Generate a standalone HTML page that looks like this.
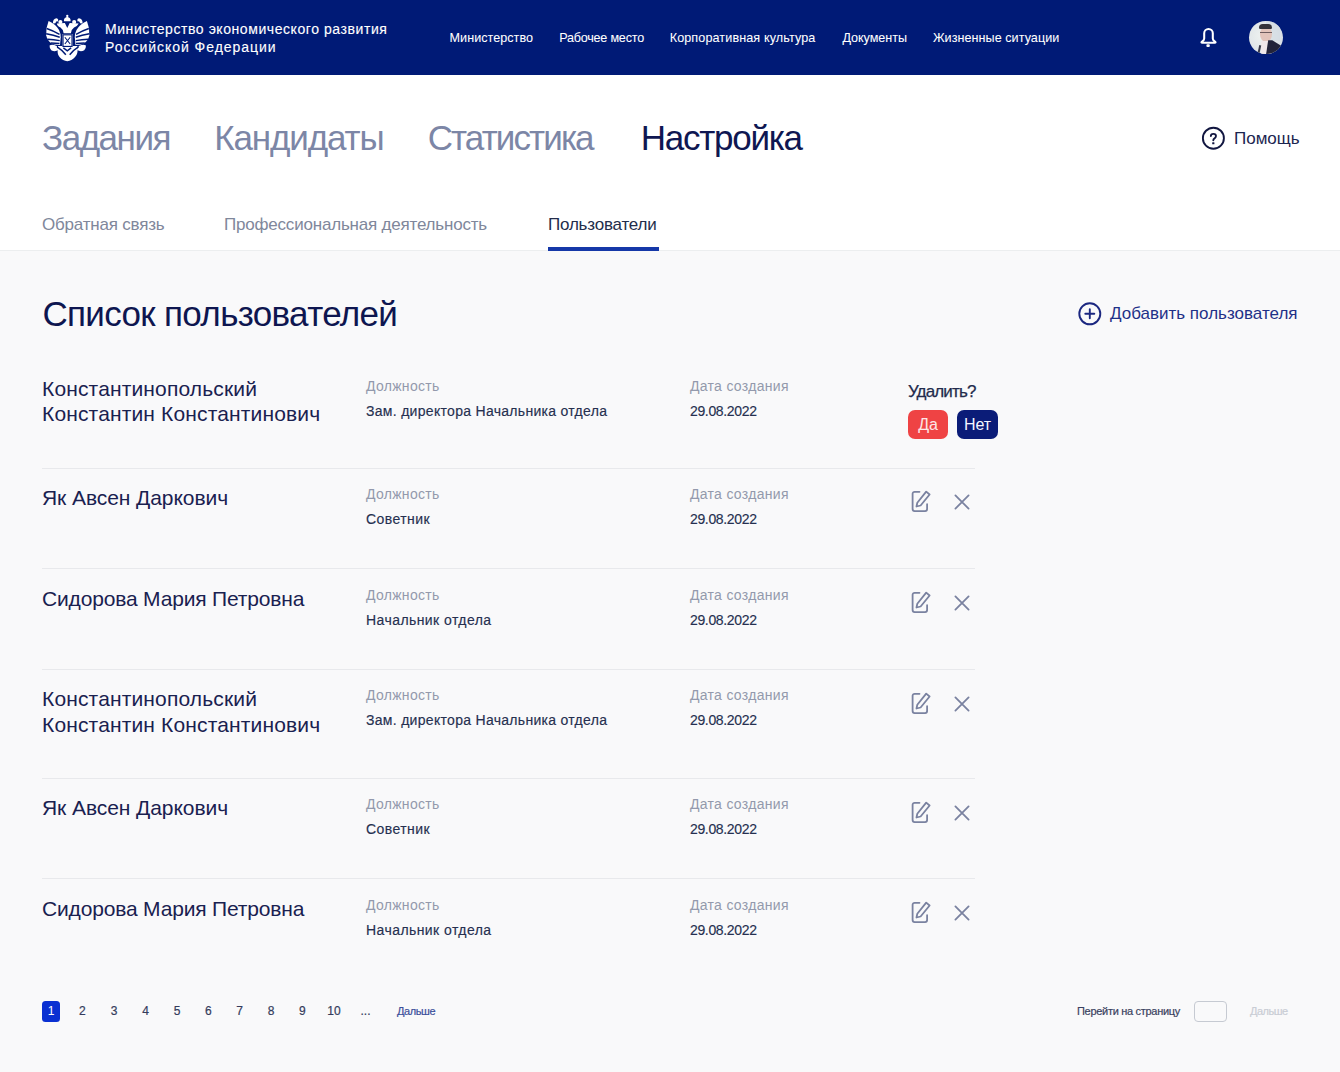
<!DOCTYPE html>
<html lang="ru">
<head>
<meta charset="utf-8">
<title>Список пользователей</title>
<style>
*{margin:0;padding:0;box-sizing:border-box}
html,body{width:1340px;height:1072px;overflow:hidden}
body{position:relative;background:#f9f9fa;font-family:"Liberation Sans",sans-serif;color:#1c2a5c}
.a{position:absolute;white-space:nowrap;line-height:1}
#hdr{position:absolute;left:0;top:0;width:1340px;height:75px;background:#001a76}
#top{position:absolute;left:0;top:75px;width:1340px;height:176px;background:#fff;border-bottom:1px solid #eceeef}
.ht{color:#fff;font-size:14px;-webkit-text-stroke:0.12px #fff}
.nav{color:#fff;font-size:12.6px;-webkit-text-stroke:0.05px #fff}
.bt{font-size:35px;color:#7c86a6}
.st{font-size:17px;color:#80879b;letter-spacing:-0.2px}
.nm{font-size:21px;color:#1a2150;line-height:25.2px;letter-spacing:0.18px}
.lb{font-size:14px;color:#9399ac;letter-spacing:0.3px}
.vl{font-size:14px;color:#263050;letter-spacing:0.3px;-webkit-text-stroke:0.15px #263050}
.row{position:absolute;left:0;width:1340px;height:100px}
.sep{position:absolute;left:42px;width:933px;height:1px;background:#e8e9ec}
.pg{font-size:12px;color:#343c5c;-webkit-text-stroke:0.2px currentColor}
.btn{position:absolute;height:29px;border-radius:7px;font-size:16px;line-height:30.4px;text-align:center}
.ic{position:absolute;fill:none;stroke:#7a82a0;stroke-width:1.8;stroke-linecap:round;stroke-linejoin:round}
</style>
</head>
<body>
<div id="hdr"></div>
<div id="top"></div>

<svg class="a" style="left:44px;top:12px" width="48" height="52" viewBox="0 0 990 1072"><g fill="#fff">
<circle cx="480" cy="82" r="24"/>
<path d="M412 190 Q405 120 480 100 Q555 120 548 190 Z"/>
<circle cx="338" cy="205" r="42"/><circle cx="622" cy="205" r="42"/>
<path d="M185 235 Q180 135 260 130 Q310 145 285 195 Q250 175 235 230 Z"/>
<path d="M795 235 Q800 135 720 130 Q670 145 695 195 Q730 175 745 230 Z"/>
<path d="M265 235 L430 225 L480 330 L530 225 L715 235 Q690 290 620 320 Q560 360 555 440 L405 440 Q400 360 340 320 Q270 290 265 235 Z"/>
<path d="M95 185 Q240 250 310 370 Q345 440 345 520 L330 680 Q230 690 150 645 Q70 590 45 480 Q35 330 95 185 Z"/>
<path d="M885 185 Q740 250 670 370 Q635 440 635 520 L650 680 Q750 690 830 645 Q910 590 935 480 Q945 330 885 185 Z"/>
<path d="M378 455 H592 V725 H378 Z"/>
<path d="M115 690 Q170 660 260 700 L300 780 Q230 830 150 790 Q110 750 115 690 Z"/>
<path d="M865 690 Q810 660 720 700 L680 780 Q750 830 830 790 Q870 750 865 690 Z"/>
<path d="M290 700 L690 700 Q710 860 640 930 Q570 1010 480 1015 Q390 1010 320 930 Q260 860 290 700 Z"/>
</g>
<g fill="none" stroke="#001a76">
<path stroke-width="30" d="M55 340 Q200 390 320 460 M45 450 Q200 480 325 520 M70 560 Q200 570 325 590 M140 640 Q230 640 320 650"/>
<path stroke-width="30" d="M925 340 Q780 390 660 460 M935 450 Q780 480 655 520 M910 560 Q780 570 655 590 M840 640 Q750 640 660 650"/>
<path stroke-width="30" d="M270 720 Q380 790 450 880 M710 720 Q600 790 530 880 M400 740 L480 800 L560 740"/>
<rect x="392" y="470" width="186" height="240" stroke-width="24"/>
<path stroke-width="22" d="M430 520 L540 660 M540 520 L430 660"/>
</g>
</svg>
<div class="a ht" style="left:105px;top:21.6px;letter-spacing:0.57px">Министерство экономического развития</div>
<div class="a ht" style="left:105px;top:39.8px;letter-spacing:0.97px">Российской Федерации</div>

<div class="a nav" style="left:449.6px;top:32px;letter-spacing:0.03px">Министерство</div>
<div class="a nav" style="left:559.2px;top:32px;letter-spacing:-0.22px">Рабочее место</div>
<div class="a nav" style="left:669.7px;top:32px;letter-spacing:0.11px">Корпоративная культура</div>
<div class="a nav" style="left:842.4px;top:32px;letter-spacing:-0.04px">Документы</div>
<div class="a nav" style="left:932.9px;top:32px;letter-spacing:0.05px">Жизненные ситуации</div>

<svg class="a" style="left:1197px;top:26px" width="23" height="23" viewBox="0 0 23 23"><path d="M7.2 7.3A4.3 4.3 0 0 1 15.8 7.3V12.6Q15.8 14.2 17.6 15.4Q19.4 16.7 17.8 16.7H5.2Q3.6 16.7 5.4 15.4Q7.2 14.2 7.2 12.6Z" fill="none" stroke="#fff" stroke-width="2.05" stroke-linejoin="round"/><rect x="9.4" y="18.2" width="3.4" height="2.9" rx="1" fill="#fff"/></svg>
<div class="a" style="left:1249.3px;top:20.8px;width:33.5px;height:33.5px;border-radius:50%;overflow:hidden;background:radial-gradient(circle at 40% 45%,#eef2f0 0,#e3e8ea 45%,#cdd5e2 100%)">
  <div style="position:absolute;left:17px;top:0;width:14px;height:20px;background:#d3dbe3;opacity:.7"></div>
  <div style="position:absolute;left:10.4px;top:6px;width:12.3px;height:15.5px;border-radius:45% 45% 50% 50%;background:#e2c4bb"></div>
  <div style="position:absolute;left:10.2px;top:3px;width:12.6px;height:5px;border-radius:6px 6px 2px 2px;background:#34323a"></div>
  <div style="position:absolute;left:10.6px;top:10.8px;width:12px;height:1.3px;background:#6e5c5e"></div>
  <div style="position:absolute;left:11.5px;top:20px;width:11px;height:15px;background:#f0e8ea"></div>
  <div style="position:absolute;left:16.5px;top:19.5px;width:17px;height:16px;background:#22233a;clip-path:polygon(14% 0,38% 0,100% 40%,100% 100%,0 100%)"></div>
  <div style="position:absolute;left:8.8px;top:24px;width:1.6px;height:12px;background:#3a3b4a;transform:rotate(12deg)"></div>
</div>

<div class="a bt" style="left:42px;top:120px;letter-spacing:-1.47px">Задания</div>
<div class="a bt" style="left:214.2px;top:120px;letter-spacing:-1.12px">Кандидаты</div>
<div class="a bt" style="left:427.7px;top:120px;letter-spacing:-1.88px">Статистика</div>
<div class="a bt" style="left:640.7px;top:120px;color:#0f1752;letter-spacing:-1.24px">Настройка</div>

<svg class="a" style="left:1200px;top:125px" width="27" height="27" viewBox="0 0 27 27"><circle cx="13.4" cy="13.2" r="10.5" fill="none" stroke="#111640" stroke-width="1.9"/><path d="M10.85 11.1Q10.85 8.85 13.4 8.85Q15.95 8.85 15.95 11Q15.95 12.5 14.5 13.4Q13.3 14.1 13.3 15.3" fill="none" stroke="#111640" stroke-width="1.9" stroke-linecap="round"/><rect x="12.2" y="17.2" width="2.2" height="2.1" rx="0.4" fill="#111640"/></svg>
<div class="a" style="left:1234px;top:129.7px;font-size:17px;color:#1b2550">Помощь</div>

<div class="a st" style="left:42px;top:215.5px">Обратная связь</div>
<div class="a st" style="left:224px;top:215.5px">Профессиональная деятельность</div>
<div class="a st" style="left:548px;top:215.5px;color:#232d4b">Пользователи</div>
<div class="a" style="left:547.5px;top:247px;width:111px;height:4px;background:#1538a8"></div>

<div class="a" style="left:42.4px;top:296px;font-size:35px;color:#0e1650;letter-spacing:-0.65px">Список пользователей</div>
<svg class="a" style="left:1077px;top:301px" width="26" height="26" viewBox="0 0 26 26"><circle cx="12.8" cy="12.8" r="10.5" fill="none" stroke="#1b2780" stroke-width="1.9"/><path d="M12.8 8.3V17.3M8.3 12.8H17.3" stroke="#1b2780" stroke-width="1.9" stroke-linecap="round"/></svg>
<div class="a" style="left:1110px;top:305px;font-size:17px;color:#1f3188">Добавить пользователя</div>

<div class="row" style="top:359.5px">
<div class="a nm" style="left:42px;top:16.5px;letter-spacing:0.15px">Константинопольский<br>Константин Константинович</div>
<div class="a lb" style="left:366px;top:19px">Должность</div>
<div class="a vl" style="left:366px;top:44px;letter-spacing:0.3px">Зам. директора Начальника отдела</div>
<div class="a lb" style="left:690px;top:19px">Дата создания</div>
<div class="a vl" style="left:690px;top:44px;letter-spacing:-0.35px">29.08.2022</div>
<div class="a" style="left:908px;top:23px;font-size:17px;color:#232b4c;letter-spacing:-0.85px;-webkit-text-stroke:0.25px #232b4c">Удалить?</div>
<div class="btn" style="left:908px;top:50.5px;width:40px;background:#ef4344;color:#fde6e6">Да</div>
<div class="btn" style="left:957px;top:50.5px;width:41px;background:#0b1c78;color:#f4f6ff">Нет</div>
</div>
<div class="row" style="top:468.3px">
<div class="a nm" style="left:42px;top:17px;letter-spacing:-0.07px">Як Авсен Даркович</div>
<div class="a lb" style="left:366px;top:19px">Должность</div>
<div class="a vl" style="left:366px;top:44px;letter-spacing:0.43px">Советник</div>
<div class="a lb" style="left:690px;top:19px">Дата создания</div>
<div class="a vl" style="left:690px;top:44px;letter-spacing:-0.35px">29.08.2022</div>
<svg class="ic" style="left:911px;top:22.2px" width="20" height="22" viewBox="0 0 20 22"><path d="M8.5 1.8H3.6a2 2 0 0 0-2 2V19.1a2 2 0 0 0 2 2H14.1a2 2 0 0 0 2-2V14.2"/><path d="M5.5 16.5L6.3 12.8L15.2 1.6L18.6 4.5L9.6 15.5Z"/></svg>
<svg class="ic" style="left:953px;top:25.2px" width="18" height="18" viewBox="0 0 18 18"><path d="M2.4 2.4L15.6 15.6M15.6 2.4L2.4 15.6"/></svg>
</div>
<div class="row" style="top:568.8px">
<div class="a nm" style="left:42px;top:17px;letter-spacing:-0.17px">Сидорова Мария Петровна</div>
<div class="a lb" style="left:366px;top:19px">Должность</div>
<div class="a vl" style="left:366px;top:44px;letter-spacing:0.43px">Начальник отдела</div>
<div class="a lb" style="left:690px;top:19px">Дата создания</div>
<div class="a vl" style="left:690px;top:44px;letter-spacing:-0.35px">29.08.2022</div>
<svg class="ic" style="left:911px;top:22.2px" width="20" height="22" viewBox="0 0 20 22"><path d="M8.5 1.8H3.6a2 2 0 0 0-2 2V19.1a2 2 0 0 0 2 2H14.1a2 2 0 0 0 2-2V14.2"/><path d="M5.5 16.5L6.3 12.8L15.2 1.6L18.6 4.5L9.6 15.5Z"/></svg>
<svg class="ic" style="left:953px;top:25.2px" width="18" height="18" viewBox="0 0 18 18"><path d="M2.4 2.4L15.6 15.6M15.6 2.4L2.4 15.6"/></svg>
</div>
<div class="row" style="top:669.4px">
<div class="a nm" style="left:42px;top:17px;letter-spacing:0.15px">Константинопольский<br>Константин Константинович</div>
<div class="a lb" style="left:366px;top:19px">Должность</div>
<div class="a vl" style="left:366px;top:44px;letter-spacing:0.3px">Зам. директора Начальника отдела</div>
<div class="a lb" style="left:690px;top:19px">Дата создания</div>
<div class="a vl" style="left:690px;top:44px;letter-spacing:-0.35px">29.08.2022</div>
<svg class="ic" style="left:911px;top:22.2px" width="20" height="22" viewBox="0 0 20 22"><path d="M8.5 1.8H3.6a2 2 0 0 0-2 2V19.1a2 2 0 0 0 2 2H14.1a2 2 0 0 0 2-2V14.2"/><path d="M5.5 16.5L6.3 12.8L15.2 1.6L18.6 4.5L9.6 15.5Z"/></svg>
<svg class="ic" style="left:953px;top:25.2px" width="18" height="18" viewBox="0 0 18 18"><path d="M2.4 2.4L15.6 15.6M15.6 2.4L2.4 15.6"/></svg>
</div>
<div class="row" style="top:778.4px">
<div class="a nm" style="left:42px;top:17px;letter-spacing:-0.07px">Як Авсен Даркович</div>
<div class="a lb" style="left:366px;top:19px">Должность</div>
<div class="a vl" style="left:366px;top:44px;letter-spacing:0.43px">Советник</div>
<div class="a lb" style="left:690px;top:19px">Дата создания</div>
<div class="a vl" style="left:690px;top:44px;letter-spacing:-0.35px">29.08.2022</div>
<svg class="ic" style="left:911px;top:22.2px" width="20" height="22" viewBox="0 0 20 22"><path d="M8.5 1.8H3.6a2 2 0 0 0-2 2V19.1a2 2 0 0 0 2 2H14.1a2 2 0 0 0 2-2V14.2"/><path d="M5.5 16.5L6.3 12.8L15.2 1.6L18.6 4.5L9.6 15.5Z"/></svg>
<svg class="ic" style="left:953px;top:25.2px" width="18" height="18" viewBox="0 0 18 18"><path d="M2.4 2.4L15.6 15.6M15.6 2.4L2.4 15.6"/></svg>
</div>
<div class="row" style="top:878.7px">
<div class="a nm" style="left:42px;top:17px;letter-spacing:-0.17px">Сидорова Мария Петровна</div>
<div class="a lb" style="left:366px;top:19px">Должность</div>
<div class="a vl" style="left:366px;top:44px;letter-spacing:0.43px">Начальник отдела</div>
<div class="a lb" style="left:690px;top:19px">Дата создания</div>
<div class="a vl" style="left:690px;top:44px;letter-spacing:-0.35px">29.08.2022</div>
<svg class="ic" style="left:911px;top:22.2px" width="20" height="22" viewBox="0 0 20 22"><path d="M8.5 1.8H3.6a2 2 0 0 0-2 2V19.1a2 2 0 0 0 2 2H14.1a2 2 0 0 0 2-2V14.2"/><path d="M5.5 16.5L6.3 12.8L15.2 1.6L18.6 4.5L9.6 15.5Z"/></svg>
<svg class="ic" style="left:953px;top:25.2px" width="18" height="18" viewBox="0 0 18 18"><path d="M2.4 2.4L15.6 15.6M15.6 2.4L2.4 15.6"/></svg>
</div>
<div class="sep" style="top:468px"></div>
<div class="sep" style="top:568px"></div>
<div class="sep" style="top:669px"></div>
<div class="sep" style="top:778px"></div>
<div class="sep" style="top:878px"></div>

<div class="a" style="left:42px;top:1001px;width:18px;height:20.5px;border-radius:3.5px;background:#0a30d2;color:#fff;font-size:12px;line-height:20.5px;text-align:center">1</div>
<div class="a pg" style="left:67.4px;top:1005px;width:30px;text-align:center">2</div>
<div class="a pg" style="left:99px;top:1005px;width:30px;text-align:center">3</div>
<div class="a pg" style="left:130.5px;top:1005px;width:30px;text-align:center">4</div>
<div class="a pg" style="left:162px;top:1005px;width:30px;text-align:center">5</div>
<div class="a pg" style="left:193.3px;top:1005px;width:30px;text-align:center">6</div>
<div class="a pg" style="left:224.6px;top:1005px;width:30px;text-align:center">7</div>
<div class="a pg" style="left:256px;top:1005px;width:30px;text-align:center">8</div>
<div class="a pg" style="left:287.3px;top:1005px;width:30px;text-align:center">9</div>
<div class="a pg" style="left:319px;top:1005px;width:30px;text-align:center">10</div>
<div class="a pg" style="left:350.5px;top:1005px;width:30px;text-align:center">...</div>
<div class="a pg" style="left:397px;top:1005.5px;font-size:11px;color:#3b4f9a;letter-spacing:-0.4px">Дальше</div>
<div class="a pg" style="left:1077px;top:1005.5px;font-size:11px;color:#3a4260;letter-spacing:-0.3px">Перейти на страницу</div>
<div class="a" style="left:1193.5px;top:1001px;width:33px;height:20.5px;border:1.5px solid #c6cad2;border-radius:4px;background:transparent"></div>
<div class="a pg" style="left:1250px;top:1005.5px;font-size:11px;color:#c9cdd5;letter-spacing:-0.5px">Дальше</div>
</body>
</html>
